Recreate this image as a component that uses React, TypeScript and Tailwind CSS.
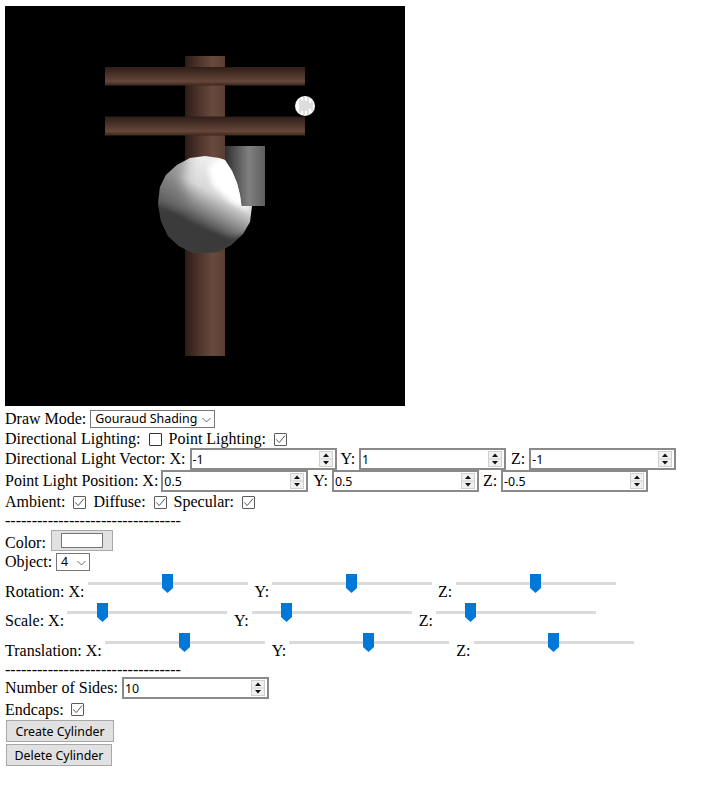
import React from "react";

const serif = "font-['Liberation_Serif',serif] text-[16px] leading-[18px] text-black";
const ctl = "font-['Noto_Sans',sans-serif] text-[12.4px] text-black";

function Check({ on = true, className = "" }: { on?: boolean; className?: string }) {
  return (
    <span
      className={
        "inline-flex h-[13px] w-[13px] shrink-0 items-center justify-center rounded-[1px] border bg-white " +
        (on ? "border-[#5c5c5c] " : "border-[#333333] ") +
        className
      }
    >
      {on && (
        <svg width="11" height="11" viewBox="0 0 11 11" fill="none">
          <path d="M1.2 5.3 L4.2 8.6 L10 1.6" stroke="#555" strokeWidth="1" />
        </svg>
      )}
    </span>
  );
}

function Num({ value, className = "" }: { value: string; className?: string }) {
  return (
    <span className={"relative inline-block h-[22px] w-[147px] shrink-0 " + className}>
      <input
        readOnly
        value={value}
        className={"block h-full w-full border-2 border-[#8a8a8a] bg-white pl-[1px] outline-none " + ctl}
      />
      <svg className="absolute left-[129px] top-[3px]" width="14" height="16" viewBox="0 0 14 16">
        <rect x="0" y="0" width="14" height="16" fill="#d0d0d0" />
        <rect x="1" y="1" width="12" height="6.5" fill="#f0f0f0" />
        <rect x="1" y="8.5" width="12" height="6.5" fill="#f0f0f0" />
        <path d="M7 2.5 L10 6 L4 6 Z" fill="#111" />
        <path d="M7 13.5 L10 10 L4 10 Z" fill="#111" />
      </svg>
    </span>
  );
}

function Slider({ pos, className = "" }: { pos: number; className?: string }) {
  return (
    <span className={"relative block h-[29px] w-[160px] shrink-0 " + className}>
      <span className="absolute left-0 right-0 top-[10px] h-[3px] bg-[#dadada]" />
      <svg className="absolute top-[2px]" style={{ left: pos }} width="11" height="19" viewBox="0 0 11 19">
        <path d="M0 0 H11 V14 L5.5 19 L0 14 Z" fill="#0078d7" />
      </svg>
    </span>
  );
}

function Select({ label, className = "" }: { label: string; className?: string }) {
  return (
    <span className={"relative inline-flex h-[18px] items-center border border-[#767676] bg-white pl-[4px] " + ctl + " " + className}>
      {label}
      <svg className="absolute right-[3px] top-[6px]" width="9" height="6" viewBox="0 0 9 6" fill="none">
        <path d="M0.5 1 L4.5 5 L8.5 1" stroke="#666" strokeWidth="1" />
      </svg>
    </span>
  );
}

function Btn({ children, className = "" }: { children: React.ReactNode; className?: string }) {
  return (
    <button className={"block h-[22px] border border-[#a8a8a8] bg-[#e1e1e1] pt-[1px] " + ctl + " " + className}>{children}</button>
  );
}

function Scene() {
  const sphere =
    "M158 204 L160 187 L166 175 L177 165 L190 158 L205 156 L219 158 L225 160 L232 171 L237 183 L240 195 L241.5 206 L252 206 L250 222 L243 234 L231 245 L218 252 L193 253 L179 246 L168 236 L161 221 Z";
  const dots: [number, number][] = [];
  for (let y = 97; y <= 115; y++) {
    for (let x = 296; x <= 314; x++) {
      const d = Math.hypot(x - 305, y - 106);
      if (d < 9 && (x + y) % 2 === 0 && y % 2 === 0 && (d < 6 || x % 4 === 0)) dots.push([x, y]);
    }
  }
  return (
    <svg className="block" width="400" height="400" viewBox="5 6 400 400">
      <defs>
        <linearGradient id="pole" x1="0" x2="1" y1="0" y2="0">
          <stop offset="0" stopColor="#2c1c16" />
          <stop offset="0.35" stopColor="#4e342a" />
          <stop offset="0.7" stopColor="#694a3d" />
          <stop offset="1" stopColor="#5a3e33" />
        </linearGradient>
        <linearGradient id="bar" x1="0" x2="0" y1="0" y2="1">
          <stop offset="0" stopColor="#2e1e18" />
          <stop offset="0.45" stopColor="#4e352b" />
          <stop offset="0.78" stopColor="#664639" />
          <stop offset="1" stopColor="#3a271f" />
        </linearGradient>
        <linearGradient id="cyl" x1="0" x2="1" y1="0" y2="0">
          <stop offset="0" stopColor="#2e2e2e" />
          <stop offset="0.6" stopColor="#808080" />
          <stop offset="1" stopColor="#5e5e5e" />
        </linearGradient>
        <linearGradient id="sph" gradientUnits="userSpaceOnUse" x1="232" y1="172" x2="200" y2="232">
          <stop offset="0" stopColor="#eeeeee" />
          <stop offset="0.4" stopColor="#d8d8d8" />
          <stop offset="0.6" stopColor="#a0a0a0" />
          <stop offset="0.72" stopColor="#808080" />
          <stop offset="0.95" stopColor="#3c3c3c" />
        </linearGradient>
        <filter id="soft" x="-30%" y="-30%" width="160%" height="160%">
          <feGaussianBlur stdDeviation="2.5" />
        </filter>
        <filter id="softer" x="-40%" y="-40%" width="180%" height="180%">
          <feGaussianBlur stdDeviation="6" />
        </filter>
        <clipPath id="sphClip">
          <path d={sphere} />
        </clipPath>
      </defs>
      <rect x="5" y="6" width="400" height="400" fill="#000" />
      <rect x="185" y="56" width="40" height="300" fill="url(#pole)" />
      <rect x="105" y="67" width="200" height="18.5" fill="url(#bar)" />
      <rect x="105" y="116.5" width="200" height="19" fill="url(#bar)" />
      <rect x="225" y="146" width="40" height="60" fill="url(#cyl)" />
      <path d={sphere} fill="url(#sph)" />
      <g clipPath="url(#sphClip)">
        <path d="M145 150 L188 150 L182 185 L190 205 L145 205 Z" fill="#666666" opacity="0.6" filter="url(#softer)" />
        <path d="M145 208 L195 226 L235 240 L215 265 L145 265 Z" fill="#3a3a3a" filter="url(#soft)" />
        <path d="M208 168 L222 156 L240 170 L248 210 L232 203 L212 185 Z" fill="#fff" filter="url(#soft)" />
        <path d="M205 250 L250 232 L250 262 L200 262 Z" fill="#3a3a3a" filter="url(#soft)" />
      </g>
      <circle cx="305" cy="106" r="10" fill="#fff" />
      {dots.map(([x, y], i) => (
        <rect key={i} x={x - 0.5} y={y - 0.5} width="1" height="1" fill="#7a7a7a" />
      ))}
    </svg>
  );
}

export default function App() {
  return (
    <div className={"h-[798px] w-[723px] bg-white pl-[5px] pt-[6px] " + serif}>
      <Scene />
      <div className="mt-[2px] flex h-[22px] items-center">
        <span>Draw Mode:</span>
        <Select label="Gouraud Shading" className="ml-[4px] w-[125px]" />
      </div>
      <div className="flex h-[18px] items-center">
        <span>Directional Lighting:</span>
        <Check on={false} className="ml-[8px]" />
        <span className="ml-[7px]">Point Lighting:</span>
        <Check className="ml-[8px]" />
      </div>
      <div className="flex h-[22px] items-center">
        <span>Directional Light Vector: X:</span>
        <Num value="-1" className="ml-[4px]" />
        <span className="ml-[4px]">Y:</span>
        <Num value="1" className="ml-[4px]" />
        <span className="ml-[5px]">Z:</span>
        <Num value="-1" className="ml-[4px]" />
      </div>
      <div className="flex h-[22px] items-center">
        <span>Point Light Position: X:</span>
        <Num value="0.5" className="ml-[3px]" />
        <span className="ml-[5px]">Y:</span>
        <Num value="0.5" className="ml-[4px]" />
        <span className="ml-[4px]">Z:</span>
        <Num value="-0.5" className="ml-[4px]" />
      </div>
      <div className="flex h-[20px] items-center">
        <span>Ambient:</span>
        <Check className="ml-[8px]" />
        <span className="ml-[7px]">Diffuse:</span>
        <Check className="ml-[8px]" />
        <span className="ml-[7px]">Specular:</span>
        <Check className="ml-[8px]" />
      </div>
      <div className="flex h-[18px] items-center">---------------------------------</div>
      <div className="flex h-[22px] items-start">
        <span className="self-end">Color:</span>
        <span className="ml-[5px] flex h-[21px] w-[62px] items-center justify-center border border-[#a8a8a8] bg-[#e1e1e1]">
          <span className="block h-[15px] w-[42px] border border-[#767676] bg-white" />
        </span>
      </div>
      <div className="flex h-[19px] items-center">
        <span>Object:</span>
        <Select label="4" className="ml-[4px] w-[34px]" />
      </div>
      <div className="flex h-[30px] items-end">
        <span>Rotation: X:</span>
        <Slider pos={74} className="ml-[3px]" />
        <span className="ml-[7px]">Y:</span>
        <Slider pos={74} className="ml-[3px]" />
        <span className="ml-[6px]">Z:</span>
        <Slider pos={74} className="ml-[4px]" />
      </div>
      <div className="flex h-[29px] items-end">
        <span>Scale: X:</span>
        <Slider pos={30} className="ml-[3px]" />
        <span className="ml-[7px]">Y:</span>
        <Slider pos={29} className="ml-[3px]" />
        <span className="ml-[7px]">Z:</span>
        <Slider pos={29} className="ml-[3px]" />
      </div>
      <div className="flex h-[30px] items-end">
        <span>Translation: X:</span>
        <Slider pos={74} className="ml-[3px]" />
        <span className="ml-[7px]">Y:</span>
        <Slider pos={74} className="ml-[3px]" />
        <span className="ml-[7px]">Z:</span>
        <Slider pos={74} className="ml-[3px]" />
      </div>
      <div className="flex h-[17px] items-center pt-[2px]">---------------------------------</div>
      <div className="flex h-[22px] items-center">
        <span>Number of Sides:</span>
        <Num value="10" className="ml-[4px]" />
      </div>
      <div className="flex h-[21px] items-center">
        <span>Endcaps:</span>
        <Check className="ml-[7px]" />
      </div>
      <Btn className="ml-[1px] w-[108px]">Create Cylinder</Btn>
      <Btn className="ml-[1px] mt-[2px] w-[106px]">Delete Cylinder</Btn>
    </div>
  );
}
